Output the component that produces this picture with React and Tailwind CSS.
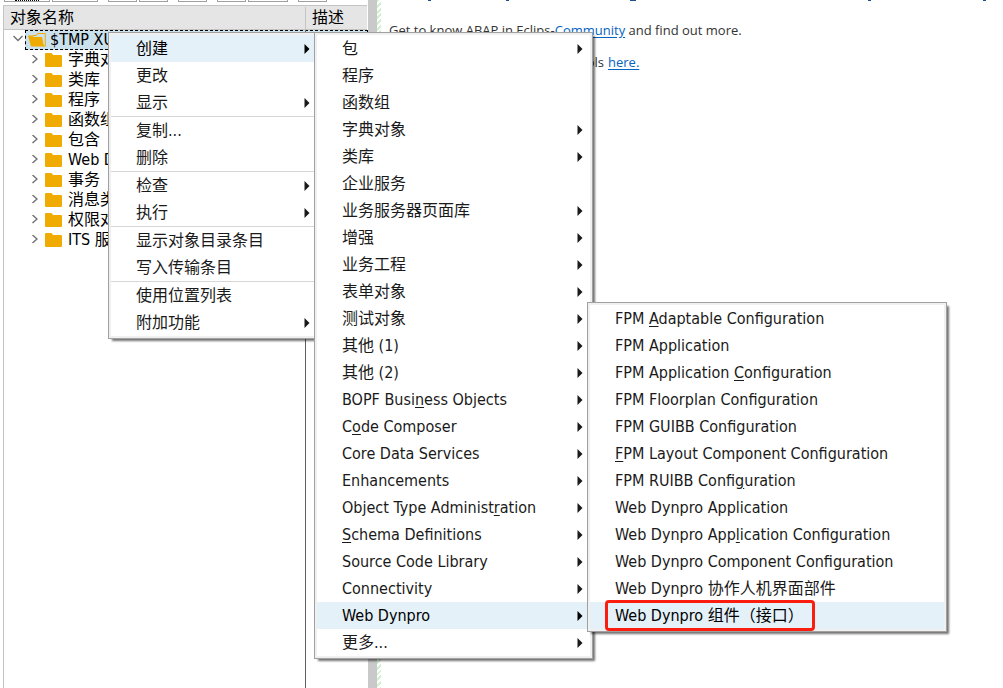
import clsx from 'clsx';

const TOOLBAR = [
  ['w-[46px]', 'w-[46px]'],
  ['w-[29px]', 'w-[29px]'],
  ['w-[29px]'],
  ['w-[29px]', 'w-10'],
  ['w-[29px]'],
];

const TREE = ['字典对象', '类库', '程序', '函数组', '包含', 'Web Dynpro', '事务', '消息类', '权限对象', 'ITS 服务'];

const MAIN_MENU = [
  [{ label: '创建', sub: true, active: true }, { label: '更改' }, { label: '显示', sub: true }],
  [{ label: '复制...' }, { label: '删除' }],
  [{ label: '检查', sub: true }, { label: '执行', sub: true }],
  [{ label: '显示对象目录条目' }, { label: '写入传输条目' }],
  [{ label: '使用位置列表' }, { label: '附加功能', sub: true }],
];

// an underscore marks the mnemonic letter that follows it
const CREATE_MENU = [
  [
    { label: '包', sub: true },
    { label: '程序' },
    { label: '函数组' },
    { label: '字典对象', sub: true },
    { label: '类库', sub: true },
    { label: '企业服务' },
    { label: '业务服务器页面库', sub: true },
    { label: '增强', sub: true },
    { label: '业务工程', sub: true },
    { label: '表单对象', sub: true },
    { label: '测试对象', sub: true },
    { label: '其他 (1)', sub: true },
    { label: '其他 (2)', sub: true },
    { label: 'BOPF Busi_ness Objects', sub: true },
    { label: 'C_ode Composer', sub: true },
    { label: 'Core Data Services', sub: true },
    { label: 'Enhancements', sub: true },
    { label: 'Object Type Administ_ration', sub: true },
    { label: '_Schema Definitions', sub: true },
    { label: 'Source Code Library', sub: true },
    { label: 'Connectivity', sub: true },
    { label: 'Web Dynpro', sub: true, active: true },
    { label: '更多...', sub: true },
  ],
];

const DYNPRO_MENU = [
  [
    { label: 'FPM _Adaptable Configuration' },
    { label: 'FPM Application' },
    { label: 'FPM Application _Configuration' },
    { label: 'FPM Floorplan Configuration' },
    { label: 'FPM GUIBB Configuration' },
    { label: '_FPM Layout Component Configuration' },
    { label: 'FPM RUIBB Confi_guration' },
    { label: 'Web Dynpro Application' },
    { label: 'Web Dynpro App_lication Configuration' },
    { label: 'Web Dynpro Component Configuration' },
    { label: 'Web Dynpro 协作人机界面部件' },
    { label: 'Web Dynpro 组件（接口）', active: true, marked: true },
  ],
];

function Label({ text }) {
  const i = text.indexOf('_');
  if (i < 0) return <span>{text}</span>;
  return (
    <span>
      {text.slice(0, i)}
      <span className="underline underline-offset-2">{text[i + 1]}</span>
      {text.slice(i + 2)}
    </span>
  );
}

function Menu({ groups, className }) {
  return (
    <div
      role="menu"
      className={clsx(
        'absolute border border-[#a0a0a0] bg-[#f0f0f0] p-0.5 text-[#1a1a1a] shadow-[3px_3px_2px_-1px_rgba(0,0,0,0.55)]',
        className
      )}
    >
      {groups.map((items, g) => (
        <div key={g} className={clsx('bg-white', g > 0 && 'border-t border-[#d7d7d7]')}>
          {items.map((item) => (
            <button
              key={item.label}
              role="menuitem"
              className={clsx(
                'relative flex h-[27px] w-full items-center justify-between pt-px pr-[7px] pl-[25px] text-left whitespace-nowrap',
                item.active && 'bg-[#e5f1f9] text-black'
              )}
            >
              <Label text={item.label} />
              {item.sub && (
                <svg width="6" height="10" viewBox="0 0 6 10" fill="currentColor">
                  <path d="M0.5 0L5.5 5L0.5 10Z" />
                </svg>
              )}
              {item.marked && (
                <span className="absolute -top-0.5 left-[15px] h-[31px] w-[210px] rounded-sm border-3 border-[#fb1d10]" />
              )}
            </button>
          ))}
        </div>
      ))}
    </div>
  );
}

function Folder() {
  return (
    <svg width="17" height="14" viewBox="0 0 17 14" className="shrink-0">
      <path d="M0 1Q0 0 1 0H6.5L8 2H16Q17 2 17 3V13Q17 14 16 14H1Q0 14 0 13Z" fill="#f0ab00" />
    </svg>
  );
}

function OpenFolder() {
  return (
    <svg width="18" height="14" viewBox="0 0 18 14" className="shrink-0">
      <path d="M5 3.5V2.5H8.5L9.5 0.5H17.3V13H15" fill="none" stroke="#f0ab00" />
      <path d="M0 2.5H4.5L5.5 4H14L16 13.5H3Z" fill="#f0ab00" />
    </svg>
  );
}

function Tree() {
  return (
    <ul className="relative flex-1 text-black">
      <li className="flex h-5 items-center pl-2">
        <svg width="12" height="10" viewBox="0 0 12 10" fill="none" stroke="#707070" strokeWidth="1.4" className="shrink-0">
          <path d="M1.5 1L6 5.5L10.5 1" />
        </svg>
        <span className="ml-px flex h-5 flex-1 items-center gap-1 border border-dashed border-black bg-[#cbe1ec] pl-0.5 whitespace-nowrap">
          <OpenFolder />
          $TMP XU
        </span>
      </li>
      {TREE.map((name) => (
        <li key={name} className="flex h-5 items-center pl-7 whitespace-nowrap">
          <svg width="6" height="10" viewBox="0 0 6 10" fill="none" stroke="#707070" strokeWidth="1.4" className="shrink-0">
            <path d="M0.5 0L5 4L0.5 8" />
          </svg>
          <span className="ml-[7px] flex items-center gap-1.5">
            <Folder />
            {name}
          </span>
        </li>
      ))}
      <li aria-hidden="true" className="absolute inset-y-0 left-[301px] w-px bg-[#606060]" />
    </ul>
  );
}

export default function App() {
  return (
    <div className="relative flex h-screen overflow-hidden bg-white font-['DejaVu_Sans_Condensed','Noto_Sans_CJK_SC',sans-serif] text-base leading-5">
      <aside className="flex w-[368px] shrink-0 flex-col pl-[3px]">
        <div className="flex h-[5px] gap-2.5 pl-px">
          {TOOLBAR.map((group, g) => (
            <div key={g} className="flex gap-0.5">
              {group.map((width, i) => (
                <button
                  key={i}
                  aria-label={`工具 ${g + 1}.${i + 1}`}
                  className={clsx('h-0.5 border-x border-b border-[#a0a0a0]', width)}
                >
                  {g === 0 && i === 0 && <span className="mx-auto block w-6 border-t border-dotted border-black" />}
                </button>
              ))}
            </div>
          ))}
        </div>
        <div className="mr-px flex h-[25px] items-center border border-r-0 border-[#c4c4c4] bg-[#e5e5e5] pt-px text-black">
          <span className="flex h-full w-[302px] items-center border-r border-[#c4c4c4] pl-1.5">对象名称</span>
          <span className="pl-1.5">描述</span>
        </div>
        <div className="flex flex-1 border-l border-[#c4c4c4]">
          <Tree />
        </div>
      </aside>

      <div className="w-[9px] shrink-0 bg-[#c9c9c9]" />
      <div className="w-1 shrink-0 bg-[repeating-linear-gradient(135deg,#d0f0d0_0px,#d0f0d0_2px,#ffffff_2px,#ffffff_4px)]" />

      <main className="flex-1 pl-2 font-['Open_Sans','Noto_Sans_CJK_SC',sans-serif] text-[13px] leading-4 text-[#333333]">
        {/* descenders of the headline scrolled off the top */}
        <svg width="600" height="6" viewBox="0 0 600 6" fill="#1f4e8c" className="block">
          <path d="M39 0h3v1h-3zM117 0h3v1h-3zM241 0h6v1h-6zM479 0h3v1h-3zM594 0h3v1h-3z" />
        </svg>
        <p className="mt-4 whitespace-nowrap">
          Get to know ABAP in Eclips-
          <a href="#community" className="text-[#0563c1] underline underline-offset-2">Community</a> and find out more.
        </p>
        <p className="mt-4 whitespace-nowrap">
          <span className="mr-1 inline-block w-[215px] text-right">tools</span>
          <a href="#here" className="text-[#0563c1] underline underline-offset-2">here.</a>
        </p>
      </main>

      <Menu groups={MAIN_MENU} className="top-8 left-[108px] w-[212px]" />
      <Menu groups={CREATE_MENU} className="top-8 left-[314px] w-[279px]" />
      <Menu groups={DYNPRO_MENU} className="top-[302px] left-[587px] w-[360px]" />
    </div>
  );
}
